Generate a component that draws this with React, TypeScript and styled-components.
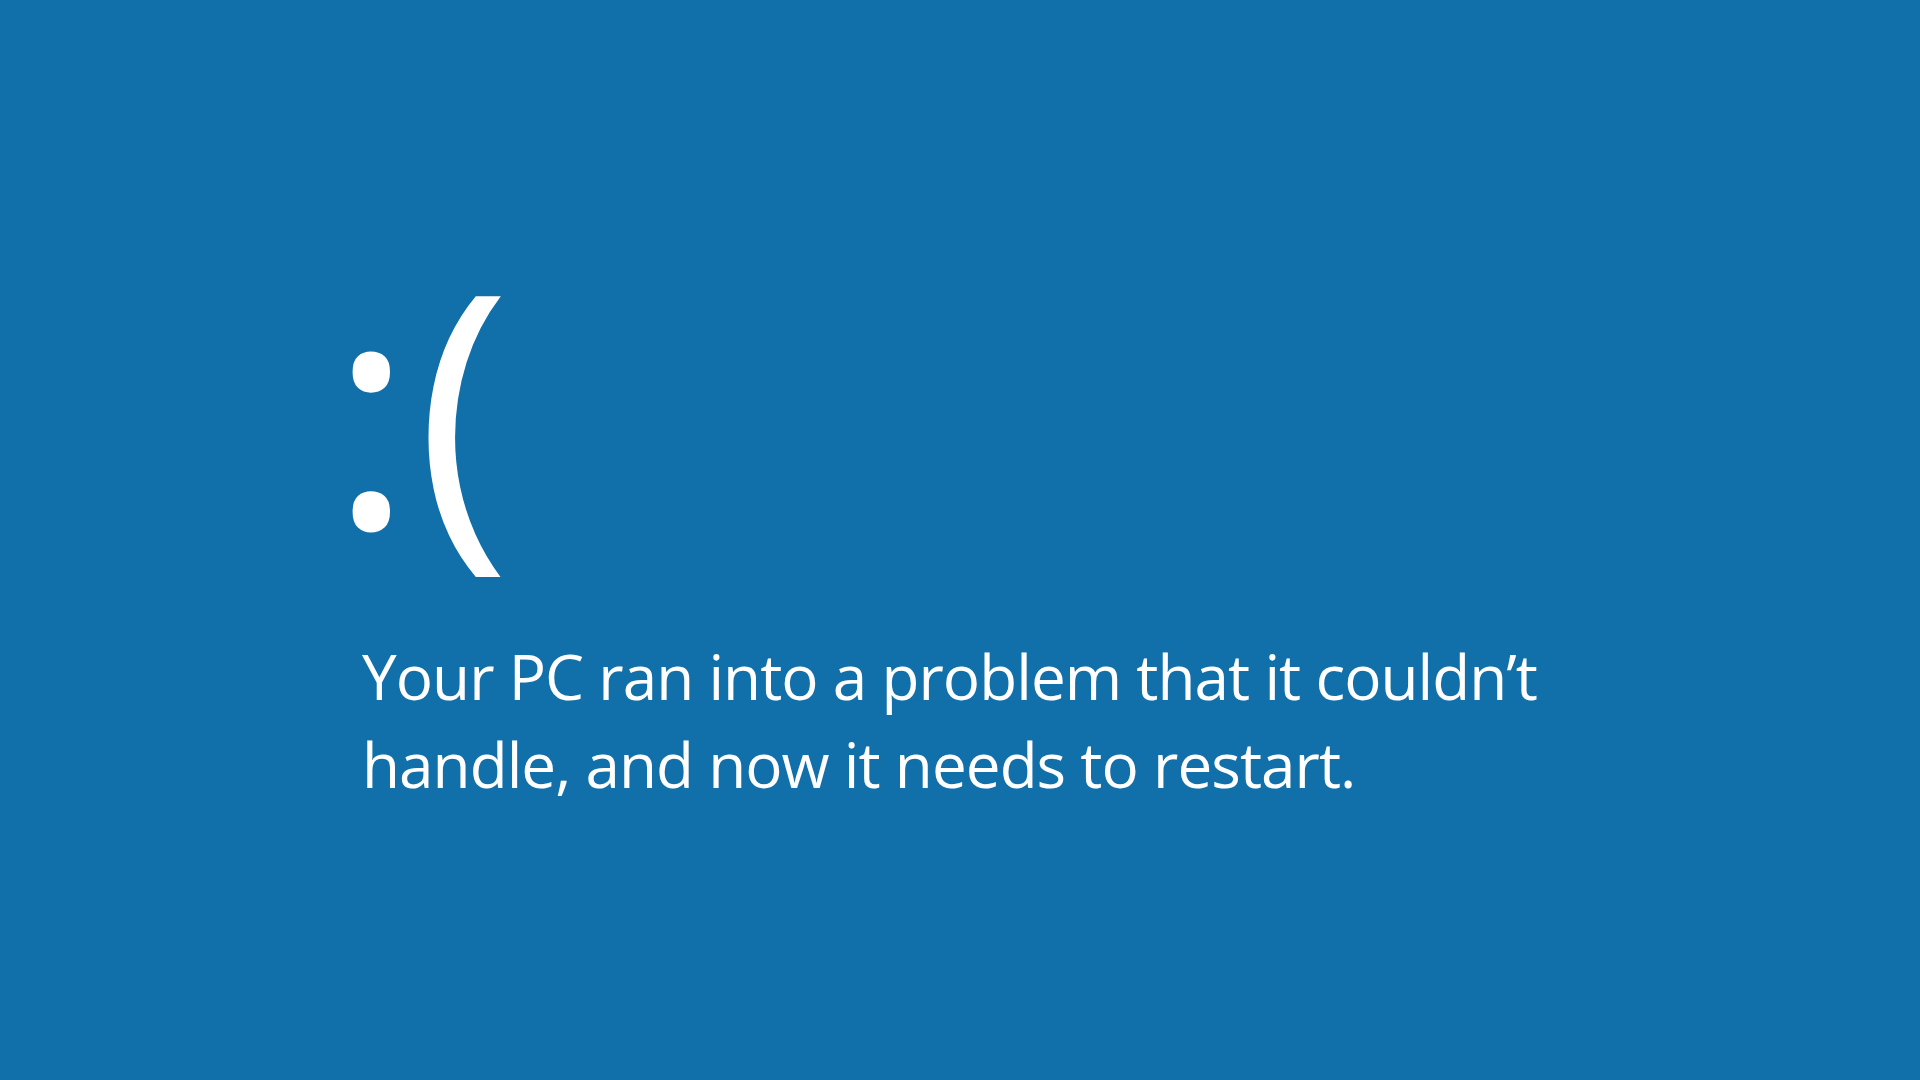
import React from "react";
import styled, { createGlobalStyle } from "styled-components";

const GlobalStyle = createGlobalStyle`
  html, body {
    margin: 0;
    padding: 0;
    background: #1170aa;
  }
  #root {
    min-height: 100vh;
  }
`;

const Screen = styled.main`
  box-sizing: border-box;
  width: 100%;
  height: 100vh;
  background: #1170aa;
  color: #ffffff;
  font-family: "Open Sans", "Noto Sans", "Liberation Sans", sans-serif;
  padding: 0 0 0 329px;
  display: flex;
  flex-direction: column;
  overflow: hidden;
`;

const Emoticon = styled.div`
  display: flex;
  flex-direction: row;
  align-items: baseline;
  margin-top: 240px;
  line-height: 1;
  font-size: 322px;
  font-weight: 400;
`;

const Colon = styled.span`
  margin-right: 2px;
  transform: translateY(2px);
`;

const Paren = styled.span``;

const Message = styled.p`
  margin: 70px 0 0 33px;
  font-size: 62px;
  line-height: 88px;
  font-weight: 400;
  letter-spacing: -0.95px;
  white-space: nowrap;
`;

export default function App() {
  return (
    <>
      <GlobalStyle />
      <Screen>
        <Emoticon>
          <Colon>:</Colon>
          <Paren>(</Paren>
        </Emoticon>
        <Message>
          Your PC ran into a problem that it couldn’t
          <br />
          handle, and now it needs to restart.
        </Message>
      </Screen>
    </>
  );
}
